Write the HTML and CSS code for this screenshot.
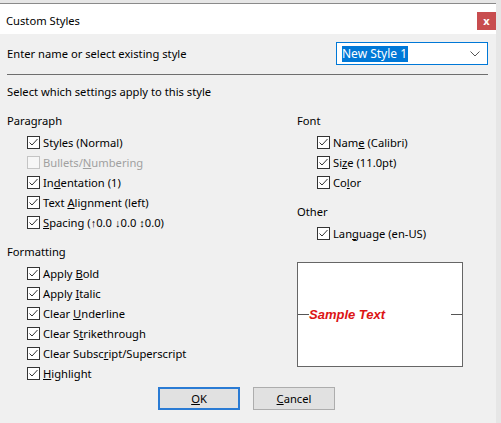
FILE: index.html
```html
<!DOCTYPE html>
<html lang="en">
<head>
    <meta charset="UTF-8">
    <title>Custom Styles</title>
    <link rel="stylesheet" href="styles.css">
</head>
<body>
    <div class="window">
        <div class="title-bar">
            <span class="title">Custom Styles</span>
            <button class="close-btn">x</button>
        </div>
        <div class="content">
            <div class="name-row">
                <label>Enter name or select existing style</label>
                <div class="combo">
                    <span class="combo-value">New Style 1</span>
                    <svg class="chevron" width="10" height="6" viewBox="0 0 10 6"><polyline points="0.5,0.5 5,5 9.5,0.5" fill="none" stroke="#555" stroke-width="1"/></svg>
                </div>
            </div>
            <div class="separator"></div>
            <div class="intro">Select which settings apply to this style</div>

            <div class="columns">
                <div class="column">
                    <div class="group-title">Paragraph</div>
                    <div class="item"><span class="box checked"></span><span>Styles (Normal)</span></div>
                    <div class="item disabled"><span class="box"></span><span>Bullets/<u>N</u>umbering</span></div>
                    <div class="item"><span class="box checked"></span><span>In<u>d</u>entation (1)</span></div>
                    <div class="item"><span class="box checked"></span><span>Text <u>A</u>lignment (left)</span></div>
                    <div class="item"><span class="box checked"></span><span><u>S</u>pacing (↑0.0 ↓0.0 ↕0.0)</span></div>

                    <div class="group-title spaced">Formatting</div>
                    <div class="item"><span class="box checked"></span><span>Apply <u>B</u>old</span></div>
                    <div class="item"><span class="box checked"></span><span>Apply <u>I</u>talic</span></div>
                    <div class="item"><span class="box checked"></span><span>Clear <u>U</u>nderline</span></div>
                    <div class="item"><span class="box checked"></span><span>Clear S<u>t</u>rikethrough</span></div>
                    <div class="item"><span class="box checked"></span><span>Clear Subsc<u>r</u>ipt/Superscript</span></div>
                    <div class="item"><span class="box checked"></span><span><u>H</u>ighlight</span></div>
                </div>
                <div class="column">
                    <div class="group-title">Font</div>
                    <div class="item"><span class="box checked"></span><span>Nam<u>e</u> (Calibri)</span></div>
                    <div class="item"><span class="box checked"></span><span>Si<u>z</u>e (11.0pt)</span></div>
                    <div class="item"><span class="box checked"></span><span>Co<u>l</u>or</span></div>

                    <div class="group-title spaced">Other</div>
                    <div class="item"><span class="box checked"></span><span>Lan<u>g</u>uage (en-US)</span></div>

                    <div class="preview">
                        <span class="baseline-mark"></span>
                        <span class="sample">Sample Text</span>
                        <span class="fill"></span>
                        <span class="baseline-mark"></span>
                    </div>
                </div>
            </div>

            <div class="buttons">
                <button class="btn default"><u>O</u>K</button>
                <button class="btn"><u>C</u>ancel</button>
            </div>
        </div>
    </div>
</body>
</html>
```

FILE: styles.css
```css
body {
    margin: 0;
    background-color: #e6e6e6;
    font-family: "Noto Sans", sans-serif;
    font-size: 11.2px;
    color: #000;
}
.window {
    width: 496px;
    height: 420px;
    margin-top: 3px;
    border-top: 1px solid #8a8a8a;
    background-color: #f0f0f0;
}
.title-bar {
    height: 30px;
    background-color: #fff;
    display: flex;
    align-items: center;
    justify-content: space-between;
    padding-left: 6px;
}
.title {
    margin-top: 2px;
}
.close-btn {
    width: 19px;
    height: 18px;
    margin-top: 4px;
    border: none;
    padding: 0;
    background-color: #c84d4f;
    color: #fff;
    font-family: "Noto Sans", sans-serif;
    font-size: 11px;
    font-weight: bold;
    line-height: 16px;
}
.content {
    padding: 8px 8px 0 7px;
}
.name-row {
    display: flex;
    justify-content: space-between;
    align-items: center;
    height: 23px;
}
.combo {
    width: 138px;
    height: 21px;
    border: 1px solid #0078d7;
    background-color: #fff;
    display: flex;
    align-items: center;
    justify-content: space-between;
    padding: 0 7px 0 5px;
    font-size: 12px;
}
.combo-value {
    background-color: #0078d7;
    color: #fff;
    line-height: 16px;
    padding-right: 1px;
}
.separator {
    height: 1px;
    background-color: #6e6e6e;
    margin: 9px 0 7px 0;
    width: 481px;
}
.intro {
    line-height: 20px;
}
.columns {
    display: grid;
    grid-template-columns: 290px 1fr;
    margin-top: 9px;
}
.column {
    display: flex;
    flex-direction: column;
}
.group-title {
    line-height: 20px;
    margin-bottom: 1px;
}
.group-title.spaced {
    margin-top: 10px;
}
.item {
    display: flex;
    align-items: center;
    height: 20px;
    padding-left: 20px;
}
.item.disabled {
    color: #a0a0a0;
}
.box {
    width: 13px;
    height: 13px;
    box-sizing: border-box;
    border: 1px solid #333;
    background-color: #fff;
    margin-right: 3px;
    flex-shrink: 0;
}
.box.checked {
    background-image: url("data:image/svg+xml;utf8,<svg xmlns='http://www.w3.org/2000/svg' width='11' height='11' viewBox='0 0 11 11'><polyline points='1.5,5.5 4,8 9.5,2' fill='none' stroke='%23333' stroke-width='1'/></svg>");
    background-repeat: no-repeat;
}
.item.disabled .box {
    border-color: #c4c4c4;
    background-color: #f6f6f6;
}
.preview {
    margin-top: 19px;
    width: 166px;
    height: 105px;
    box-sizing: border-box;
    border: 1px solid #666;
    background-color: #fff;
    display: flex;
    align-items: center;
}
.baseline-mark {
    width: 11px;
    height: 1px;
    background-color: #555;
}
.sample {
    color: #dc1414;
    font-family: "Liberation Sans", sans-serif;
    font-weight: bold;
    font-style: italic;
    font-size: 13px;
}
.fill {
    flex: 1;
}
.buttons {
    display: flex;
    justify-content: center;
    gap: 13px;
    margin-top: 4px;
    padding-right: 2px;
}
.btn {
    width: 82px;
    height: 23px;
    box-sizing: border-box;
    background-color: #e1e1e1;
    border: 1px solid #adadad;
    font-family: "Noto Sans", sans-serif;
    font-size: 11.2px;
    color: #000;
    padding: 0;
}
.btn.default {
    border: 2px solid #2a7bd4;
}
```
